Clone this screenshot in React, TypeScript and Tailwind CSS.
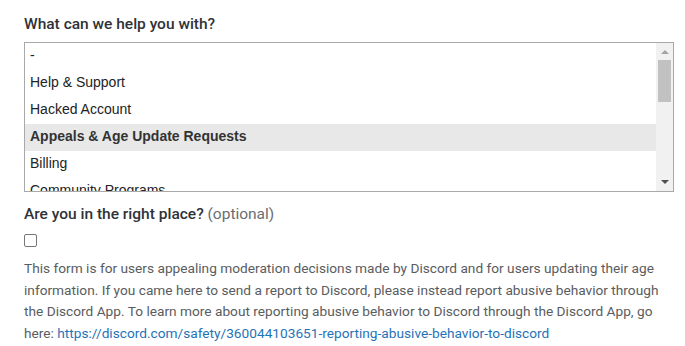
import React from "react";

const items = [
  "-",
  "Help & Support",
  "Hacked Account",
  "Appeals & Age Update Requests",
  "Billing",
  "Community Programs",
];

export default function App() {
  return (
    <div className="w-[685px] h-[346px] bg-white overflow-hidden px-[24px] pt-[14px]">
      <div className="font-['Roboto',sans-serif] text-[15.5px] font-medium text-[#2f3237] leading-[20px] mb-[8px]">
        What can we help you with?
      </div>
      <div className="flex w-[650px] h-[150px] border border-[#a9a9a9] bg-white overflow-hidden">
        <div className="flex-1 flex flex-col overflow-hidden font-['Liberation_Sans',Arial,sans-serif] text-[14px] leading-[16px] text-[#222]">
          {items.map((it, i) => (
            <div
              key={it}
              className={
                i === 3
                  ? "h-[27px] shrink-0 pt-[4px] pl-[5px] bg-[#e8e8e8] font-bold text-[#333]"
                  : "h-[27px] shrink-0 pt-[4px] pl-[5px]"
              }
            >
              {it}
            </div>
          ))}
        </div>
        <div className="w-[17px] bg-[#f1f1f1] flex flex-col items-center">
          <div className="h-[17px] w-full flex items-center justify-center">
            <svg width="8" height="5" viewBox="0 0 8 5">
              <path d="M0 5 L4 1 L8 5 Z" fill="#a3a3a3" />
            </svg>
          </div>
          <div className="w-[13px] h-[42px] bg-[#c1c1c1]" />
          <div className="flex-1" />
          <div className="h-[17px] w-full flex items-center justify-center">
            <svg width="8" height="5" viewBox="0 0 8 5">
              <path d="M0 0 L8 0 L4 4 Z" fill="#505050" />
            </svg>
          </div>
        </div>
      </div>
      <div className="mt-[12px] font-['Roboto',sans-serif] text-[15.5px] font-medium text-[#2f3237] leading-[20px]">
        Are you in the right place? <span className="font-normal text-[#6a6e73]">(optional)</span>
      </div>
      <div className="mt-[10px] w-[13px] h-[13px] border border-[#767676] rounded-[2px]" />
      <div className="mt-[11px] font-['Roboto',sans-serif] text-[13.7px] leading-[21.5px] text-[#595c60] w-[650px]">
        <div className="whitespace-nowrap">
          This form is for users appealing moderation decisions made by Discord and for users updating their age
        </div>
        <div className="whitespace-nowrap">
          information. If you came here to send a report to Discord, please instead report abusive behavior through
        </div>
        <div className="whitespace-nowrap">
          the Discord App. To learn more about reporting abusive behavior to Discord through the Discord App, go
        </div>
        <div className="whitespace-nowrap">
          here:{" "}
          <a className="text-[#1f73b7]" href="#">
            https://discord.com/safety/360044103651-reporting-abusive-behavior-to-discord
          </a>
        </div>
      </div>
    </div>
  );
}
